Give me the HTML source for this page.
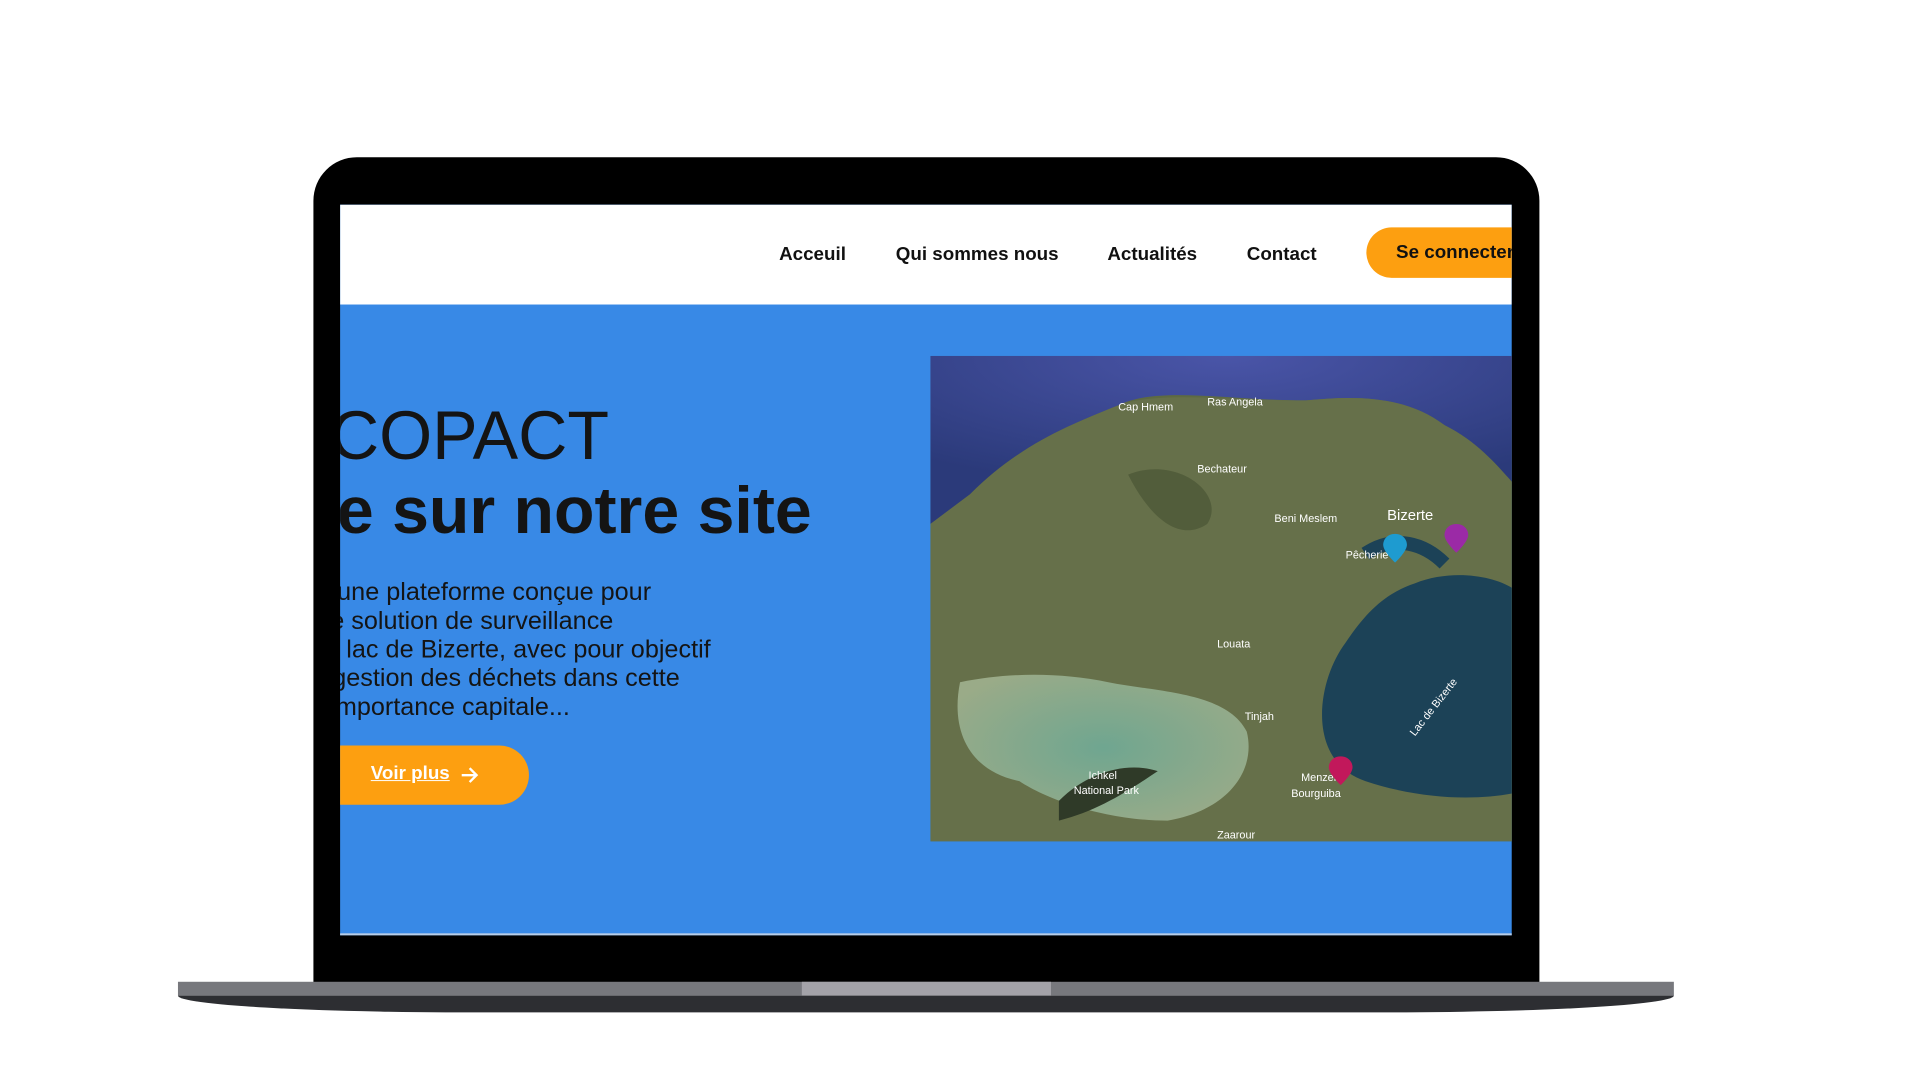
<!DOCTYPE html>
<html><head><meta charset="utf-8"><style>
*{margin:0;padding:0;box-sizing:border-box}
body{width:1920px;height:1080px;background:#fff;position:relative;overflow:hidden;font-family:"Liberation Sans",Arial,sans-serif}
#w{position:absolute;left:0;top:0;width:1920px;height:1080px;transform:scale(0.9887);transform-origin:0 0}
.body{position:absolute;left:317px;top:159px;width:1240px;height:840px;background:#000;border-radius:44px 44px 0 0}
.screen{position:absolute;left:344px;top:207px;width:1185px;height:739px;background:#3889e6;overflow:hidden;border-bottom:2px solid #b8cde6}
.nav{position:absolute;left:0;top:0;width:100%;height:101px;background:#fff}
.nav a{position:absolute;top:40px;font-size:19px;font-weight:bold;color:#111;text-decoration:none}
.btn{position:absolute;left:1038px;top:23px;width:200px;height:51px;background:#fd9f10;border-radius:26px}
.btn span{position:absolute;left:30px;top:15px;font-size:19px;font-weight:bold;color:#111;white-space:nowrap}
.r{position:absolute;left:-400px;text-align:right;white-space:nowrap;color:#141414}
.l{position:absolute;white-space:nowrap;color:#141414;font-size:25.5px}
.h1{font-size:69px;top:194px}
.h2{font-size:67px;font-weight:bold;top:271px}
.voir{position:absolute;left:-60px;top:547px;width:251px;height:60px;background:#fd9f10;border-radius:30px}
.voir span{position:absolute;left:91px;top:18px;color:#fff;font-weight:bold;font-size:19px;text-decoration:underline}
.map{position:absolute;left:597px;top:153px;width:600px;height:491px}
.base{position:absolute;left:180px;top:993px;width:1513px;height:14px;background:#77787d}
.base .c{position:absolute;left:631px;width:252px;height:14px;background:#a3a2a8}
.foot{position:absolute;left:180px;top:1007px;width:1513px;height:17px;background:#2d2e32;border-radius:0 0 300px 300px/0 0 17px 17px}
</style></head><body><div id="w">
<div class="body"></div>
<div class="screen">
 <div class="nav">
  <a style="left:444px">Acceuil</a>
  <a style="left:562px">Qui sommes nous</a>
  <a style="left:776px">Actualités</a>
  <a style="left:917px">Contact</a>
  <div class="btn"><span>Se connecter</span></div>
 </div>
 <div class="r h1" style="width:672px">ECOPACT</div>
 <div class="r h2" style="width:877px">Bienvenue sur notre site</div>
 <div class="l" style="left:-3px;top:378px">une plateforme conçue pour</div>
 <div class="l" style="left:-10px;top:407px">e solution de surveillance</div>
 <div class="l" style="left:-15px;top:436px">u lac de Bizerte, avec pour objectif</div>
 <div class="l" style="left:-8px;top:465px">gestion des déchets dans cette</div>
 <div class="l" style="left:-10px;top:494px">importance capitale...</div>
 <div class="voir"><span>Voir plus</span>
  <svg style="position:absolute;left:181px;top:21px" width="20" height="18" viewBox="0 0 20 18"><path d="M2 9H17M10 2L17 9L10 16" stroke="#fff" stroke-width="2.4" fill="none"/></svg></div>
 <svg class="map" viewBox="0 0 600 491">
  <defs>
   <radialGradient id="sea" cx="50%" cy="0%" r="80%"><stop offset="0" stop-color="#4a55a8"/><stop offset="1" stop-color="#2b3a7a"/></radialGradient>
   <radialGradient id="lag" cx="50%" cy="50%" r="60%"><stop offset="0" stop-color="#6fa690"/><stop offset="1" stop-color="#9aab88"/></radialGradient>
  </defs>
  <rect width="600" height="491" fill="#5d6a42"/>
  <path d="M0 0H600V140C580 120 560 90 520 70C480 40 430 40 380 45C300 45 230 30 190 50C140 70 90 90 40 140L0 170Z" fill="url(#sea)"/>
  <path d="M0 170L40 140C90 90 140 70 190 50C230 35 300 45 380 45C430 40 480 40 520 70C560 90 580 120 600 140V491H0Z" fill="#66704a"/>
  <path d="M200 120C250 100 300 140 280 170C250 190 220 160 200 120Z" fill="#4a5535" opacity=".7"/>
  <path d="M490 230C540 210 600 230 600 250V440C560 450 500 450 440 430C380 410 390 330 420 290C440 260 460 240 490 230Z" fill="#1c4257"/>
  <path d="M30 330C80 320 130 320 180 330C230 340 300 340 320 380C330 420 300 460 240 470C180 470 120 450 90 430C40 420 20 380 30 330Z" fill="url(#lag)"/>
  <path d="M130 450C160 420 200 410 230 420C200 440 170 460 130 470Z" fill="#2f3a28"/>
  <path d="M440 200C470 180 500 190 520 210" stroke="#1c4257" stroke-width="14" fill="none"/>
  <g font-family="Liberation Sans,sans-serif" font-size="11" fill="#fff">
   <text x="190" y="55">Cap Hmem</text><text x="280" y="50">Ras Angela</text>
   <text x="270" y="118">Bechateur</text><text x="348" y="168">Beni Meslem</text>
   <text x="462" y="166" font-size="15">Bizerte</text><text x="420" y="205">Pêcherie</text>
   <text x="290" y="295">Louata</text><text x="318" y="368">Tinjah</text>
   <text x="160" y="428">Ichkel</text><text x="145" y="443">National Park</text>
   <text x="375" y="430">Menzel</text><text x="365" y="446">Bourguiba</text>
   <text x="290" y="488">Zaarour</text>
   <text x="490" y="385" transform="rotate(-52 490 385)">Lac de Bizerte</text>
  </g>
  <path d="M470 180c-8 0-12 6-12 11c0 7 12 18 12 18s12-11 12-18c0-5-4-11-12-11z" fill="#1e9bd0"/>
  <path d="M532 170c-8 0-12 6-12 11c0 7 12 18 12 18s12-11 12-18c0-5-4-11-12-11z" fill="#9b2aa6"/>
  <path d="M415 405c-8 0-12 6-12 11c0 7 12 18 12 18s12-11 12-18c0-5-4-11-12-11z" fill="#c2185b"/>
 </svg>
</div>
<div class="base"><div class="c"></div></div>
<div class="foot"></div>
</div></body></html>
